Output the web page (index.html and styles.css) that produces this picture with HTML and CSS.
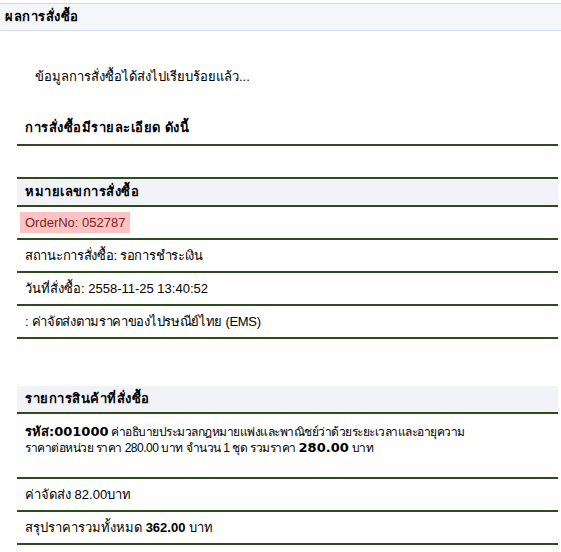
FILE: index.html
```html
<!DOCTYPE html>
<html lang="th">
<head>
<meta charset="utf-8">
<link rel="stylesheet" href="styles.css">
</head>
<body>
<div class="page-head">ผลการสั่งซื้อ</div>
<p class="notice">ข้อมูลการสั่งซื้อได้ส่งไปเรียบร้อยแล้ว...</p>
<div class="block">
  <div class="title-row">การสั่งซื้อมีรายละเอียด ดังนี้</div>
  <div class="spacer-sm"></div>
  <div class="row head top-line">หมายเลขการสั่งซื้อ</div>
  <div class="row"><span class="order-no">OrderNo: 052787</span></div>
  <div class="row narrow">สถานะการสั่งซื้อ: รอการชำระเงิน</div>
  <div class="row">วันที่สั่งซื้อ: 2558-11-25 13:40:52</div>
  <div class="row narrow">: ค่าจัดส่งตามราคาของไปรษณีย์ไทย (EMS)</div>
  <div class="spacer-lg"></div>
  <div class="row head">รายการสินค้าที่สั่งซื้อ</div>
  <div class="row item"><b class="code">รหัส:001000</b> ค่าอธิบายประมวลกฎหมายแพ่งและพาณิชย์ว่าด้วยระยะเวลาและอายุความ<br>ราคาต่อหน่วย ราคา 280.00 บาท จำนวน 1 ชุด รวมราคา <b class="sum">280.00</b> บาท</div>
  <div class="row summary">ค่าจัดส่ง 82.00บาท</div>
  <div class="row summary">สรุปราคารวมทั้งหมด <b>362.00</b> บาท</div>
</div>
</body>
</html>
```
FILE: styles.css
```css
html, body { margin: 0; padding: 0; background: #fff; }
body {
  font-family: "Liberation Sans", "DejaVu Sans", sans-serif;
  font-size: 13px;
  color: #000;
  padding-top: 3px;
}
.page-head {
  background: #f5f6fa;
  border-top: 1px solid #d4d9e8;
  border-bottom: 1px solid #d4d9e8;
  height: 26px;
  line-height: 26px;
  padding-left: 5px;
  font-weight: bold;
  letter-spacing: 0.5px;
}
.notice {
  margin: 0;
  padding: 36px 0 0 35px;
  height: 26px;
  line-height: 20px;
}
.block {
  margin: 0 3px 0 17px;
}
.title-row {
  padding: 26px 0 0 8px;
  height: 25px;
  line-height: 18px;
  font-weight: bold;
  letter-spacing: 0.5px;
  border-bottom: 2px solid #2f4a1e;
}
.spacer-sm { height: 31px; }
.spacer-lg { height: 47px; }
.row {
  border-bottom: 2px solid #2f4a1e;
  padding: 0 8px;
  height: 31px;
  line-height: 31px;
}
.row.narrow { letter-spacing: -0.3px; }
.row.top-line { border-top: 2px solid #2f4a1e; height: 25px; line-height: 25px; }
.row.head { background: #f2f3f8; font-weight: bold; height: 26px; line-height: 26px; letter-spacing: 0.5px; }
.order-no {
  background: #ffc2c2;
  color: #7a2323;
  padding: 3px 5px;
  margin-left: -5px;
}
.row.item {
  font-size: 12px;
  letter-spacing: -0.5px;
  line-height: 16px;
  padding-top: 10px;
  padding-bottom: 31px;
  height: 22px;
}
.row.item .code,
.row.item .sum {
  font-family: "DejaVu Sans", sans-serif;
  font-size: 13px;
  letter-spacing: 0;
}
```
